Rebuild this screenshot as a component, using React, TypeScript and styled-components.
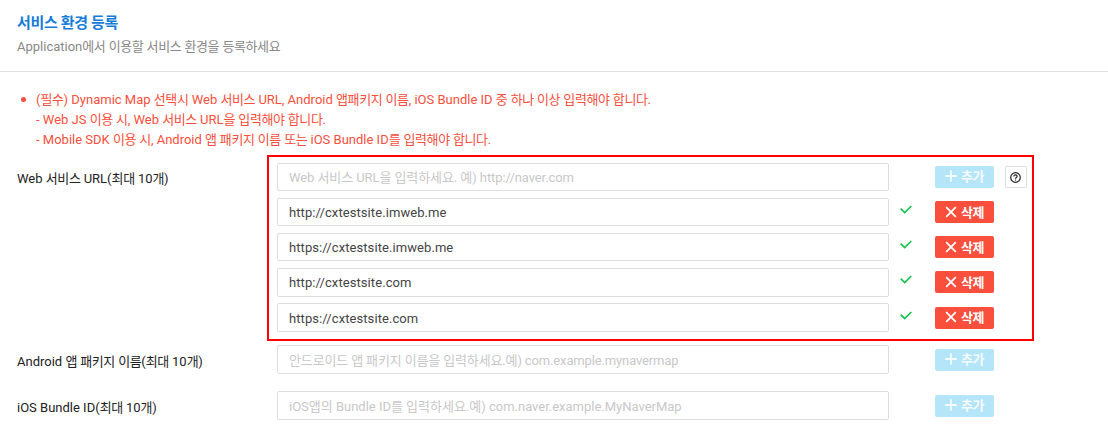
import React, { FC, useState } from "react"
import styled, { createGlobalStyle } from "styled-components"

const GlobalStyle = createGlobalStyle`
  *, *::before, *::after {
    box-sizing: border-box;
  }

  body {
    margin: 0;
    background: #fff;
    font-family: Roboto, "Noto Sans CJK KR", sans-serif;
    font-size: 13px;
    color: #222;
  }
`

const StyledPage = styled.main`
  height: 445px;
  overflow: hidden;
`

const StyledHangul = styled.span`
  letter-spacing: -0.4px;
`

const StyledHeader = styled.header`
  height: 72px;
  padding: 12px 17px 0;
  border-bottom: 1px solid #e0e0e0;
`

const StyledTitle = styled.h1`
  margin: 0;
  font-size: 15px;
  font-weight: 700;
  line-height: 22px;
  letter-spacing: -0.35px;
  color: #157cd8;
`

const StyledSubtitle = styled.p`
  margin: 3px 0 0;
  line-height: 20px;
  color: #888;
`

const StyledNotice = styled.ul`
  display: grid;
  grid-template-columns: 19px auto;
  align-content: start;
  margin: 0;
  padding: 18px 17px 0;
  height: 90.8px;
  list-style: none;
  line-height: 20px;
  color: #fa4f3c;

  &::before {
    content: "";
    width: 5px;
    height: 5px;
    margin: 7px 0 0 4px;
    border-radius: 50%;
    background: #fa4f3c;
  }
`

const StyledNoticeLine = styled.li`
  grid-column: 2;
  height: 20px;
  white-space: nowrap;
`

const StyledField = styled.section<{ $gap: string }>`
  display: grid;
  grid-template-columns: 260px 757px;
  padding-left: 17px;
  margin-bottom: ${({ $gap }) => $gap};
`

const StyledLabel = styled.div<{ $top: string }>`
  padding-top: ${({ $top }) => $top};
  height: 28.4px;
  line-height: 22px;
  white-space: nowrap;
`

const StyledRows = styled.div<{ $marked?: boolean }>`
  position: relative;
  display: grid;
  gap: 6.75px;

  ${({ $marked }) =>
    $marked &&
    `&::after {
      content: "";
      position: absolute;
      top: -7.8px;
      left: -10px;
      width: 767px;
      height: 186px;
      border: 2px solid #f00;
      pointer-events: none;
    }`}
`

const StyledRow = styled.div`
  display: grid;
  grid-template-columns: 612px 46px 59px 33px;
  align-items: center;
  height: 28.4px;
`

const StyledInput = styled.input<{ $hintSpacing?: string }>`
  width: 612px;
  height: 28.4px;
  padding: 1px 11px 0;
  border: 1px solid #ddd;
  border-radius: 2px;
  outline: none;
  background: #fff;
  font: inherit;
  letter-spacing: 0.08px;
  color: #444;

  &::placeholder {
    color: #c8c8c8;
    letter-spacing: ${({ $hintSpacing }) => $hintSpacing};
    opacity: 1;
  }
`

const StyledCheck = styled.svg`
  width: 12px;
  height: 9px;
  margin: -5px 0 0 11px;
  fill: none;
  stroke: #13c24b;
  stroke-width: 1.6;
`

const StyledButton = styled.button<{ $remove?: boolean }>`
  grid-column: 3;
  display: flex;
  align-items: center;
  justify-content: center;
  gap: 4px;
  width: 59px;
  height: 22px;
  padding: 0;
  border: 0;
  border-radius: 2px;
  background: ${({ $remove }) => ($remove ? "#fa4f3c" : "#b5e5f8")};
  color: ${({ $remove }) => ($remove ? "#fff" : "#f4fbfe")};
  font: inherit;
  font-weight: 700;
  line-height: 22px;
  letter-spacing: -0.5px;
  white-space: nowrap;

  svg {
    width: 12px;
    height: 12px;
    margin-top: -1px;
    fill: none;
    stroke: currentColor;
    stroke-width: 1.8;
  }

  span {
    padding-top: 1px;
  }
`

const StyledHelp = styled.button`
  grid-column: 4;
  display: grid;
  place-items: center;
  width: 22px;
  height: 22px;
  margin-left: 11px;
  padding: 2px 1px 0 0;
  border: 1px solid #ddd;
  border-radius: 2px;
  background: #fff;

  svg {
    width: 11px;
    height: 11px;
    fill: none;
    stroke: #222;
    stroke-width: 1.2;
  }
`

// Hangul runs are set a little tighter than the latin text around them
const MixedText: FC<{ text: string }> = ({ text }) => (
  <>
    {text
      .split(/([가-힣]+)/)
      .map((part, i) => (i % 2 ? <StyledHangul key={i}>{part}</StyledHangul> : part))}
  </>
)

const AddButton: FC<{ onClick?: () => void }> = ({ onClick }) => (
  <StyledButton onClick={onClick}>
    <svg viewBox="0 0 12 12">
      <path d="M6 .3v11.4M.3 6h11.4" />
    </svg>
    <span>추가</span>
  </StyledButton>
)

const RemoveButton: FC<{ onClick: () => void }> = ({ onClick }) => (
  <StyledButton $remove onClick={onClick}>
    <svg viewBox="0 0 12 12">
      <path d="M1.2 1.2l9.6 9.6M10.8 1.2l-9.6 9.6" />
    </svg>
    <span>삭제</span>
  </StyledButton>
)

const notices = [
  "(필수) Dynamic Map 선택시 Web 서비스 URL, Android 앱패키지 이름, iOS Bundle ID 중 하나 이상 입력해야 합니다.",
  "- Web JS 이용 시, Web 서비스 URL을 입력해야 합니다.",
  "- Mobile SDK 이용 시, Android 앱 패키지 이름 또는 iOS Bundle ID를 입력해야 합니다.",
]

const App: FC = () => {
  const [urls, setUrls] = useState([
    "http://cxtestsite.imweb.me",
    "https://cxtestsite.imweb.me",
    "http://cxtestsite.com",
    "https://cxtestsite.com",
  ])
  const [newUrl, setNewUrl] = useState("")

  const addUrl = () => {
    if (newUrl && urls.length < 10) {
      setUrls([...urls, newUrl])
      setNewUrl("")
    }
  }

  return (
    <StyledPage>
      <GlobalStyle />
      <StyledHeader>
        <StyledTitle>서비스 환경 등록</StyledTitle>
        <StyledSubtitle>
          <MixedText text="Application에서 이용할 서비스 환경을 등록하세요" />
        </StyledSubtitle>
      </StyledHeader>

      <StyledNotice>
        {notices.map((notice) => (
          <StyledNoticeLine key={notice}>
            <MixedText text={notice} />
          </StyledNoticeLine>
        ))}
      </StyledNotice>

      <StyledField $gap="13.6px">
        <StyledLabel $top="5px">
          <MixedText text="Web 서비스 URL(최대 10개)" />
        </StyledLabel>
        <StyledRows $marked>
          <StyledRow>
            <StyledInput
              $hintSpacing="-0.08px"
              value={newUrl}
              placeholder="Web 서비스 URL을 입력하세요. 예) http://naver.com"
              onChange={(e) => setNewUrl(e.target.value)}
            />
            <AddButton onClick={addUrl} />
            <StyledHelp aria-label="도움말">
              <svg viewBox="0 0 11 11">
                <circle cx="5.5" cy="5.5" r="4.8" />
                <path d="M3.9 4.5c0-2.1 3.2-2.1 3.2-.1 0 1.1-1.6 1.1-1.6 2.3M5.5 7.4v1.1" />
              </svg>
            </StyledHelp>
          </StyledRow>
          {urls.map((url) => (
            <StyledRow key={url}>
              <StyledInput value={url} readOnly />
              <StyledCheck viewBox="0 0 12 9">
                <path d="M.7 3.6l4 4L11.3 1" />
              </StyledCheck>
              <RemoveButton onClick={() => setUrls(urls.filter((item) => item !== url))} />
            </StyledRow>
          ))}
        </StyledRows>
      </StyledField>

      <StyledField $gap="17.6px">
        <StyledLabel $top="6px">
          <MixedText text="Android 앱 패키지 이름(최대 10개)" />
        </StyledLabel>
        <StyledRows>
          <StyledRow>
            <StyledInput
              $hintSpacing="-0.14px"
              placeholder="안드로이드 앱 패키지 이름을 입력하세요.예) com.example.mynavermap"
            />
            <AddButton />
          </StyledRow>
        </StyledRows>
      </StyledField>

      <StyledField $gap="0">
        <StyledLabel $top="6px">
          <MixedText text="iOS Bundle ID(최대 10개)" />
        </StyledLabel>
        <StyledRows>
          <StyledRow>
            <StyledInput
              $hintSpacing="-0.01px"
              placeholder="iOS앱의 Bundle ID를 입력하세요.예) com.naver.example.MyNaverMap"
            />
            <AddButton />
          </StyledRow>
        </StyledRows>
      </StyledField>
    </StyledPage>
  )
}

export default App
